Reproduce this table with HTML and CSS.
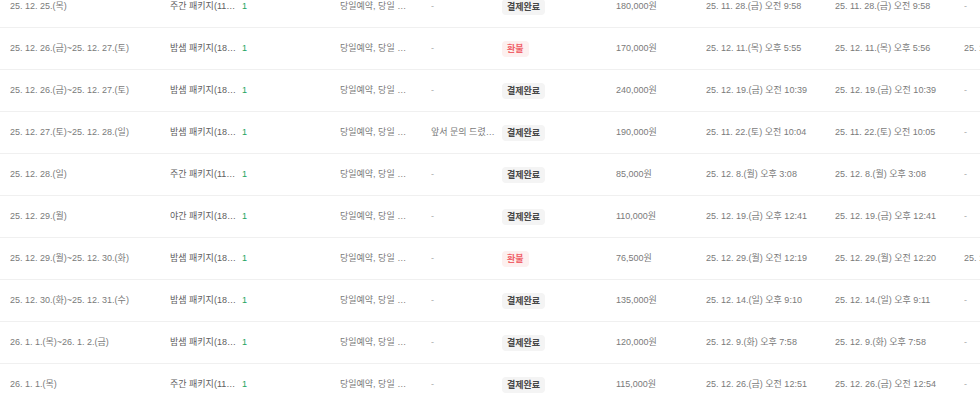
FILE: index.html
```html
<!DOCTYPE html>
<html lang="ko">
<head>
<meta charset="utf-8">
<link rel="stylesheet" href="styles.css">
</head>
<body>
<div class="table">
  <div class="row">
    <div class="c">25. 12. 25.(목)</div>
    <div class="c name"><span class="trunc w66">주간 패키지(11:00~17:00)</span></div>
    <div class="c cnt">1</div>
    <div class="c"><span class="trunc w68">당일예약, 당일 예약 가능</span></div>
    <div class="c dash">-</div>
    <div class="c"><span class="badge done">결제완료</span></div>
    <div class="c">180,000원</div>
    <div class="c">25. 11. 28.(금) 오전 9:58</div>
    <div class="c">25. 11. 28.(금) 오전 9:58</div>
    <div class="c dash">-</div>
  </div>
  <div class="row">
    <div class="c">25. 12. 26.(금)~25. 12. 27.(토)</div>
    <div class="c name"><span class="trunc w66">밤샘 패키지(18:00~09:00)</span></div>
    <div class="c cnt">1</div>
    <div class="c"><span class="trunc w68">당일예약, 당일 예약 가능</span></div>
    <div class="c dash">-</div>
    <div class="c"><span class="badge refund">환불</span></div>
    <div class="c">170,000원</div>
    <div class="c">25. 12. 11.(목) 오후 5:55</div>
    <div class="c">25. 12. 11.(목) 오후 5:56</div>
    <div class="c">25. 12. 12.(금)</div>
  </div>
  <div class="row">
    <div class="c">25. 12. 26.(금)~25. 12. 27.(토)</div>
    <div class="c name"><span class="trunc w66">밤샘 패키지(18:00~09:00)</span></div>
    <div class="c cnt">1</div>
    <div class="c"><span class="trunc w68">당일예약, 당일 예약 가능</span></div>
    <div class="c dash">-</div>
    <div class="c"><span class="badge done">결제완료</span></div>
    <div class="c">240,000원</div>
    <div class="c">25. 12. 19.(금) 오전 10:39</div>
    <div class="c">25. 12. 19.(금) 오전 10:39</div>
    <div class="c dash">-</div>
  </div>
  <div class="row">
    <div class="c">25. 12. 27.(토)~25. 12. 28.(일)</div>
    <div class="c name"><span class="trunc w66">밤샘 패키지(18:00~09:00)</span></div>
    <div class="c cnt">1</div>
    <div class="c"><span class="trunc w68">당일예약, 당일 예약 가능</span></div>
    <div class="c"><span class="trunc w65">앞서 문의 드렸던 내용입니다</span></div>
    <div class="c"><span class="badge done">결제완료</span></div>
    <div class="c">190,000원</div>
    <div class="c">25. 11. 22.(토) 오전 10:04</div>
    <div class="c">25. 11. 22.(토) 오전 10:05</div>
    <div class="c dash">-</div>
  </div>
  <div class="row">
    <div class="c">25. 12. 28.(일)</div>
    <div class="c name"><span class="trunc w66">주간 패키지(11:00~17:00)</span></div>
    <div class="c cnt">1</div>
    <div class="c"><span class="trunc w68">당일예약, 당일 예약 가능</span></div>
    <div class="c dash">-</div>
    <div class="c"><span class="badge done">결제완료</span></div>
    <div class="c">85,000원</div>
    <div class="c">25. 12. 8.(월) 오후 3:08</div>
    <div class="c">25. 12. 8.(월) 오후 3:08</div>
    <div class="c dash">-</div>
  </div>
  <div class="row">
    <div class="c">25. 12. 29.(월)</div>
    <div class="c name"><span class="trunc w66">야간 패키지(18:00~23:00)</span></div>
    <div class="c cnt">1</div>
    <div class="c"><span class="trunc w68">당일예약, 당일 예약 가능</span></div>
    <div class="c dash">-</div>
    <div class="c"><span class="badge done">결제완료</span></div>
    <div class="c">110,000원</div>
    <div class="c">25. 12. 19.(금) 오후 12:41</div>
    <div class="c">25. 12. 19.(금) 오후 12:41</div>
    <div class="c dash">-</div>
  </div>
  <div class="row">
    <div class="c">25. 12. 29.(월)~25. 12. 30.(화)</div>
    <div class="c name"><span class="trunc w66">밤샘 패키지(18:00~09:00)</span></div>
    <div class="c cnt">1</div>
    <div class="c"><span class="trunc w68">당일예약, 당일 예약 가능</span></div>
    <div class="c dash">-</div>
    <div class="c"><span class="badge refund">환불</span></div>
    <div class="c">76,500원</div>
    <div class="c">25. 12. 29.(월) 오전 12:19</div>
    <div class="c">25. 12. 29.(월) 오전 12:20</div>
    <div class="c">25. 12. 29.(월)</div>
  </div>
  <div class="row">
    <div class="c">25. 12. 30.(화)~25. 12. 31.(수)</div>
    <div class="c name"><span class="trunc w66">밤샘 패키지(18:00~09:00)</span></div>
    <div class="c cnt">1</div>
    <div class="c"><span class="trunc w68">당일예약, 당일 예약 가능</span></div>
    <div class="c dash">-</div>
    <div class="c"><span class="badge done">결제완료</span></div>
    <div class="c">135,000원</div>
    <div class="c">25. 12. 14.(일) 오후 9:10</div>
    <div class="c">25. 12. 14.(일) 오후 9:11</div>
    <div class="c dash">-</div>
  </div>
  <div class="row">
    <div class="c">26. 1. 1.(목)~26. 1. 2.(금)</div>
    <div class="c name"><span class="trunc w66">밤샘 패키지(18:00~09:00)</span></div>
    <div class="c cnt">1</div>
    <div class="c"><span class="trunc w68">당일예약, 당일 예약 가능</span></div>
    <div class="c dash">-</div>
    <div class="c"><span class="badge done">결제완료</span></div>
    <div class="c">120,000원</div>
    <div class="c">25. 12. 9.(화) 오후 7:58</div>
    <div class="c">25. 12. 9.(화) 오후 7:58</div>
    <div class="c dash">-</div>
  </div>
  <div class="row">
    <div class="c">26. 1. 1.(목)</div>
    <div class="c name"><span class="trunc w66">주간 패키지(11:00~17:00)</span></div>
    <div class="c cnt">1</div>
    <div class="c"><span class="trunc w68">당일예약, 당일 예약 가능</span></div>
    <div class="c dash">-</div>
    <div class="c"><span class="badge done">결제완료</span></div>
    <div class="c">115,000원</div>
    <div class="c">25. 12. 26.(금) 오전 12:51</div>
    <div class="c">25. 12. 26.(금) 오전 12:54</div>
    <div class="c dash">-</div>
  </div>
</div>
</body>
</html>
```
FILE: styles.css
```css
html, body {
  margin: 0;
  padding: 0;
  background: #ffffff;
  overflow: hidden;
}
body {
  font-family: "Liberation Sans", "Noto Sans CJK KR", sans-serif;
  font-size: 9px;
  color: #7a7a7a;
}
.table {
  margin-top: -14px;
  width: 1100px;
}
.row {
  display: grid;
  grid-template-columns: 160px 72px 98px 91px 71px 114px 90px 129px 129px 200px;
  align-items: center;
  height: 41px;
  padding-left: 10px;
  border-bottom: 1px solid #f0f0f0;
}
.c {
  white-space: nowrap;
  overflow: hidden;
  line-height: 15px;
}
.name {
  color: #606060;
}
.cnt {
  color: #22a35f;
}
.dash {
  color: #aaaaaa;
}
.trunc {
  display: block;
  overflow: hidden;
  text-overflow: ellipsis;
  white-space: nowrap;
}
.w66 { width: 67px; }
.w68 { width: 68px; }
.w65 { width: 66px; }
.badge {
  display: inline-block;
  padding: 0 5px;
  border-radius: 4px;
  font-weight: bold;
  line-height: 16px;
}
.done {
  background: #f4f4f4;
  color: #474747;
}
.refund {
  background: #fdf0ef;
  color: #f0646c;
}
```
